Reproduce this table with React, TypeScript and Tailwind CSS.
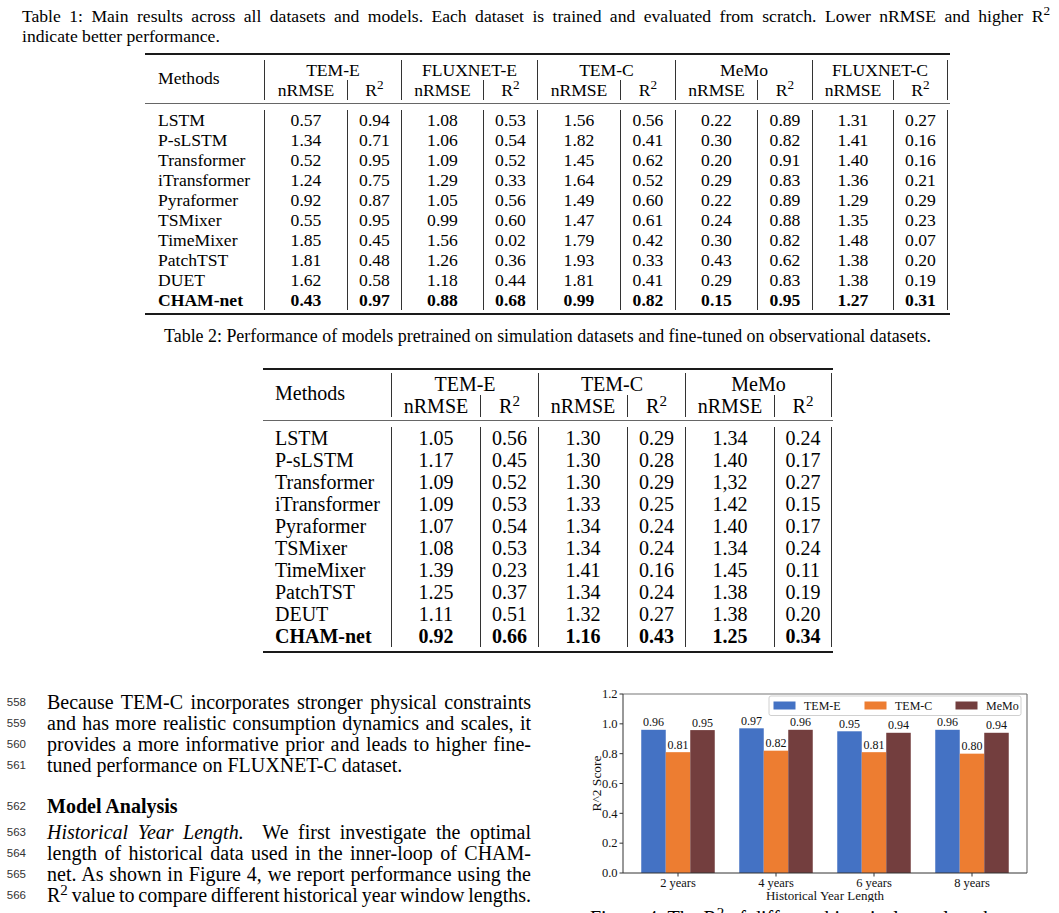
import React from "react";

type Row = [string, string[]];

const t1Groups = ["TEM-E", "FLUXNET-E", "TEM-C", "MeMo", "FLUXNET-C"];
const t1Rows: Row[] = [
  ["LSTM", ["0.57", "0.94", "1.08", "0.53", "1.56", "0.56", "0.22", "0.89", "1.31", "0.27"]],
  ["P-sLSTM", ["1.34", "0.71", "1.06", "0.54", "1.82", "0.41", "0.30", "0.82", "1.41", "0.16"]],
  ["Transformer", ["0.52", "0.95", "1.09", "0.52", "1.45", "0.62", "0.20", "0.91", "1.40", "0.16"]],
  ["iTransformer", ["1.24", "0.75", "1.29", "0.33", "1.64", "0.52", "0.29", "0.83", "1.36", "0.21"]],
  ["Pyraformer", ["0.92", "0.87", "1.05", "0.56", "1.49", "0.60", "0.22", "0.89", "1.29", "0.29"]],
  ["TSMixer", ["0.55", "0.95", "0.99", "0.60", "1.47", "0.61", "0.24", "0.88", "1.35", "0.23"]],
  ["TimeMixer", ["1.85", "0.45", "1.56", "0.02", "1.79", "0.42", "0.30", "0.82", "1.48", "0.07"]],
  ["PatchTST", ["1.81", "0.48", "1.26", "0.36", "1.93", "0.33", "0.43", "0.62", "1.38", "0.20"]],
  ["DUET", ["1.62", "0.58", "1.18", "0.44", "1.81", "0.41", "0.29", "0.83", "1.38", "0.19"]],
  ["CHAM-net", ["0.43", "0.97", "0.88", "0.68", "0.99", "0.82", "0.15", "0.95", "1.27", "0.31"]],
];

const t2Groups = ["TEM-E", "TEM-C", "MeMo"];
const t2Rows: Row[] = [
  ["LSTM", ["1.05", "0.56", "1.30", "0.29", "1.34", "0.24"]],
  ["P-sLSTM", ["1.17", "0.45", "1.30", "0.28", "1.40", "0.17"]],
  ["Transformer", ["1.09", "0.52", "1.30", "0.29", "1,32", "0.27"]],
  ["iTransformer", ["1.09", "0.53", "1.33", "0.25", "1.42", "0.15"]],
  ["Pyraformer", ["1.07", "0.54", "1.34", "0.24", "1.40", "0.17"]],
  ["TSMixer", ["1.08", "0.53", "1.34", "0.24", "1.34", "0.24"]],
  ["TimeMixer", ["1.39", "0.23", "1.41", "0.16", "1.45", "0.11"]],
  ["PatchTST", ["1.25", "0.37", "1.34", "0.24", "1.38", "0.19"]],
  ["DEUT", ["1.11", "0.51", "1.32", "0.27", "1.38", "0.20"]],
  ["CHAM-net", ["0.92", "0.66", "1.16", "0.43", "1.25", "0.34"]],
];

type TableProps = {
  cols: string;
  groups: string[];
  rows: Row[];
  text: string;
  headRows: string;
  bodyRows: string;
  headPad: string;
  bodyPad: string;
  methodsPad: string;
  lead: string;
};

function Table({ cols, groups, rows, text, headRows, bodyRows, headPad, bodyPad, methodsPad, lead }: TableProps) {
  return (
    <div className={text}>
      <div className="h-[2px] bg-[#1a1a1a]" />
      <div className={headPad}>
        <div className={`grid ${cols} ${headRows}`}>
          <div className={`row-span-2 flex items-center ${methodsPad}`}>Methods</div>
          {groups.map((g, i) => (
            <div
              key={g}
              className={`col-span-2 border-l border-[#333] text-center ${lead} ${i === groups.length - 1 ? "border-r" : ""}`}
            >
              {g}
            </div>
          ))}
          {groups.map((g, i) => (
            <React.Fragment key={g + "s"}>
              <div className={`border-l border-[#333] text-center ${lead}`}>nRMSE</div>
              <div className={`border-l border-[#333] text-center ${lead} ${i === groups.length - 1 ? "border-r" : ""}`}>
                R<sup>2</sup>
              </div>
            </React.Fragment>
          ))}
        </div>
      </div>
      <div className="h-px bg-[#666]" />
      <div className={bodyPad}>
        <div className={`grid ${cols} ${bodyRows}`}>
          {rows.map(([name, vals], ri) => {
            const bold = ri === rows.length - 1 ? "font-bold" : "";
            return (
              <React.Fragment key={name}>
                <div className={`${methodsPad} ${lead} ${bold} whitespace-nowrap`}>{name}</div>
                {vals.map((v, vi) => (
                  <div
                    key={vi}
                    className={`border-l border-[#333] text-center ${lead} ${bold} ${vi === vals.length - 1 ? "border-r" : ""}`}
                  >
                    {v}
                  </div>
                ))}
              </React.Fragment>
            );
          })}
        </div>
      </div>
      <div className="h-[2px] bg-[#1a1a1a]" />
    </div>
  );
}

function Chart() {
  const x0 = 43;
  const x1 = 447;
  const y0 = 14;
  const y1 = 193;
  const k = (y1 - y0) / 1.2;
  const yv = (v: number) => y1 - v * k;
  const colors = ["#4472c4", "#ed7d31", "#733e3e"];
  const bw = 24.5;
  const groups = [
    { label: "2 years", c: 98, vals: [0.96, 0.81, 0.958], labs: ["0.96", "0.81", "0.95"] },
    { label: "4 years", c: 196, vals: [0.97, 0.82, 0.96], labs: ["0.97", "0.82", "0.96"] },
    { label: "6 years", c: 294, vals: [0.95, 0.81, 0.94], labs: ["0.95", "0.81", "0.94"] },
    { label: "8 years", c: 392, vals: [0.96, 0.8, 0.94], labs: ["0.96", "0.80", "0.94"] },
  ];
  const ticks = [0, 0.2, 0.4, 0.6, 0.8, 1.0, 1.2];
  const ff = "'Liberation Serif', serif";
  return (
    <svg width={479} height={222} viewBox="0 0 479 222" fontFamily={ff} className="block">
      {groups.map((g) =>
        g.vals.map((v, i) => {
          const x = g.c + (i - 1) * bw - bw / 2;
          const top = yv(v);
          return (
            <g key={g.label + i}>
              <rect x={x} y={top} width={bw} height={y1 - top} fill={colors[i]} />
              <text x={x + bw / 2} y={top - 3.5} fontSize={12} textAnchor="middle" fill="#111">
                {g.labs[i]}
              </text>
            </g>
          );
        })
      )}
      <line x1={x0} y1={y0} x2={x1} y2={y0} stroke="#777" strokeWidth={1.2} />
      <line x1={x1} y1={y0} x2={x1} y2={y1} stroke="#777" strokeWidth={1.2} />
      <line x1={x0} y1={y0} x2={x0} y2={y1} stroke="#333" strokeWidth={1} />
      <line x1={x0} y1={y1} x2={x1} y2={y1} stroke="#333" strokeWidth={1} />
      {ticks.map((t) => (
        <g key={t}>
          <line x1={39.5} y1={yv(t)} x2={x0} y2={yv(t)} stroke="#333" strokeWidth={1} />
          <text x={37.5} y={yv(t) + 4.3} fontSize={12.5} textAnchor="end" fill="#111">
            {t.toFixed(1)}
          </text>
        </g>
      ))}
      {groups.map((g) => (
        <g key={g.label}>
          <line x1={g.c} y1={y1} x2={g.c} y2={y1 + 3.5} stroke="#333" strokeWidth={1} />
          <text x={g.c} y={206.5} fontSize={12.5} textAnchor="middle" fill="#111">
            {g.label}
          </text>
        </g>
      ))}
      <text x={245} y={219.5} fontSize={13} textAnchor="middle" fill="#111">
        Historical Year Length
      </text>
      <text x={0} y={0} fontSize={13.5} textAnchor="middle" fill="#111" transform="translate(20.5 103.5) rotate(-90)">
        R^2 Score
      </text>
      <rect x={189} y={16} width={252} height={19.5} rx={2} fill="#fff" fillOpacity={0.85} stroke="#d0d0d0" strokeWidth={1} />
      {["TEM-E", "TEM-C", "MeMo"].map((l, i) => (
        <g key={l}>
          <rect x={193.5 + i * 91} y={21.5} width={22} height={8} fill={colors[i]} />
          <text x={224 + i * 91} y={30} fontSize={12} fill="#111">
            {l}
          </text>
        </g>
      ))}
    </svg>
  );
}

function Line({ n, children, last }: { n: number; children: React.ReactNode; last?: boolean }) {
  return (
    <div className="flex h-[21px] items-center">
      <div className="w-[47px] shrink-0 pr-[21px] text-right font-['Liberation_Sans',sans-serif] text-[11.5px] text-[#333]">
        {n}
      </div>
      <div
        className={`w-[484px] shrink-0 text-[20px] leading-[21px] ${
          last ? "whitespace-nowrap" : "text-justify [word-spacing:-2px] [text-align-last:justify]"
        }`}
      >
        {children}
      </div>
    </div>
  );
}

export default function App() {
  return (
    <div className="relative h-[913px] w-[1059px] overflow-hidden bg-white font-['Liberation_Serif',serif] text-black">
      <div className="ml-[22px] w-[1028px] pt-[6px] text-[17.6px] leading-[20px]">
        <div className="text-justify [text-align-last:justify]">
          Table 1: Main results across all datasets and models. Each dataset is trained and evaluated from scratch.
          Lower nRMSE and higher R<sup>2</sup>
        </div>
        <div>indicate better performance.</div>
      </div>

      <div className="ml-[145px] mt-[7px] w-[805px]">
        <Table
          cols="grid-cols-[119px_83px_54px_82px_54px_83px_55px_82px_55px_81px_55px]"
          groups={t1Groups}
          rows={t1Rows}
          text="text-[17.6px]"
          headRows="grid-rows-[20px_20px]"
          bodyRows="auto-rows-[20px]"
          headPad="pt-[5px] pb-[3px]"
          bodyPad="pt-[6px] pb-[3px]"
          methodsPad="pl-[13px] pb-[4px]"
          lead="leading-[20px]"
        />
      </div>

      <div className="ml-[145px] mt-[11px] w-[805px] text-center text-[17.9px] leading-[20px]">
        Table 2: Performance of models pretrained on simulation datasets and fine-tuned on observational datasets.
      </div>

      <div className="ml-[263px] mt-[22px] w-[570px]">
        <Table
          cols="grid-cols-[128px_89px_58px_89px_58px_89px_58px]"
          groups={t2Groups}
          rows={t2Rows}
          text="text-[20px]"
          headRows="grid-rows-[22px_22px]"
          bodyRows="auto-rows-[22px]"
          headPad="pt-[3px] pb-[3px]"
          bodyPad="pt-[6px] pb-[4px]"
          methodsPad="pl-[12px] pb-[4px]"
          lead="leading-[22px]"
        />
      </div>

      <div className="mt-[27px] flex">
        <div className="w-[580px] shrink-0 pt-[12px]">
          <Line n={558}>Because TEM-C incorporates stronger physical constraints</Line>
          <Line n={559}>and has more realistic consumption dynamics and scales, it</Line>
          <Line n={560}>provides a more informative prior and leads to higher fine-</Line>
          <Line n={561} last>
            tuned performance on FLUXNET-C dataset.
          </Line>
          <div className="mt-[20px]">
            <Line n={562} last>
              <span className="font-bold">Model Analysis</span>
            </Line>
          </div>
          <div className="mt-[5px]">
            <Line n={563}>
              <i>Historical Year Length.</i>&nbsp; We first investigate the optimal
            </Line>
            <Line n={564}>length of historical data used in the inner-loop of CHAM-</Line>
            <Line n={565}>net. As shown in Figure 4, we report performance using the</Line>
            <Line n={566}>
              R<sup>2</sup> value to compare different historical year window lengths.
            </Line>
          </div>
        </div>
        <div className="w-[479px] shrink-0">
          <Chart />
          <div className="ml-[10px] mt-[6px] whitespace-nowrap text-[20px] leading-[21px]">
            Figure 4: The R<sup>2</sup> of different historical year lengths.
          </div>
        </div>
      </div>
    </div>
  );
}
